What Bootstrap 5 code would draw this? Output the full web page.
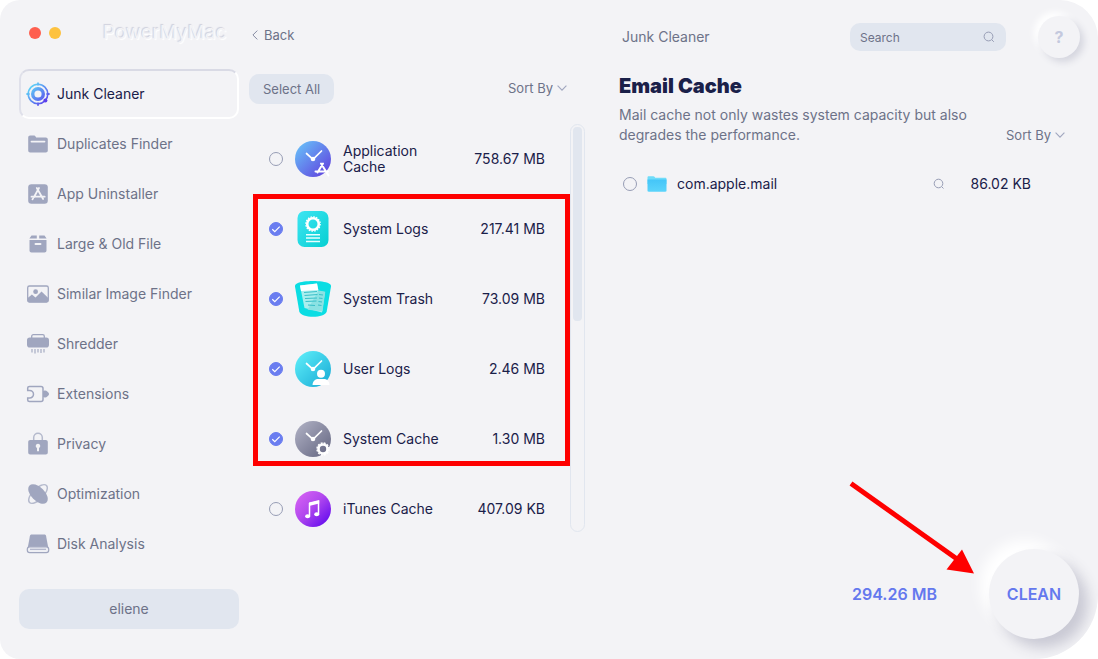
<!DOCTYPE html>
<html lang="en">
<head>
<meta charset="utf-8">
<meta name="viewport" content="width=device-width, initial-scale=1">
<title>PowerMyMac</title>
<link href="https://cdn.jsdelivr.net/npm/bootstrap@5.3.0/dist/css/bootstrap.min.css" rel="stylesheet">
<style>
  :root { --ink: #1a2049; --muted: #6d7288; --glyph: #a0a6bf; --soft: #e1e6ef; --accent: #6478ee; --panel: #f3f3f6; }
  body { font-family: Inter, "Liberation Sans", sans-serif; font-size: 14px; line-height: 20px; color: var(--muted); background: #fff; }
  .app-window { min-height: 100vh; background: var(--panel); border-radius: 20px 38px 64px 20px; padding: 0 18px 0 19px; overflow: hidden; }
  .head-bar { height: 69px; }
  .side-col { width: 220px; margin-right: 10px; }
  .mid-col { width: 336px; margin-right: 34px; }
  .window-tools { padding: 0 0 3px 10px; }
  .dot { width: 12px; height: 12px; border-radius: 50%; }
  .dot-red { background: #fe5f4f; }
  .dot-yellow { background: #fdc23f; }
  .brand { font-size: 19px; line-height: 24px; color: #f3f3f6; text-shadow: -1px -1px 1px #cfd0dc, 1px 1px 1px #fff; margin-left: 42px; }
  .side-link { height: 50px; padding: 0 7px; gap: 7px; color: var(--muted); border-radius: 10px; border: 0; text-decoration: none; }
  .side-link svg { width: 24px; height: 24px; fill: var(--glyph); flex: none; }
  .side-link.active { color: var(--ink); border: 2px solid #fff; border-top-color: #d9dae5; border-left-color: #dfe0ea; padding: 0 5px; }
  .soft-btn { background: var(--soft); color: var(--muted); border: 0; border-radius: 10px; font-size: inherit; line-height: 20px; }
  .user-btn { height: 40px; margin-bottom: 30px; }
  .all-btn { height: 30px; padding: 0 14px; font-size: 13px; line-height: 30px; }
  .back-btn { font-size: 13px; color: var(--muted); text-decoration: none; gap: 6px; padding-left: 3px; }
  .list-tools { height: 55px; padding: 5px 18px 0 0; }
  .sort-select { width: auto; padding: 0 14px 0 0; border: 0; font-size: 13px; line-height: 20px; color: var(--muted); background-color: transparent; background-position: right center; background-size: 10px 6px;
    background-image: url("data:image/svg+xml,%3Csvg xmlns='http://www.w3.org/2000/svg' viewBox='0 0 10 6'%3E%3Cpath d='M.6.6 5 5.2 9.400.6' fill='none' stroke='%23a0a6bf' stroke-width='1.1'/%3E%3C/svg%3E"); }
  .item-row { height: 70px; color: var(--ink); padding-left: 20px; gap: 12px; line-height: 16px; }
  .item-row svg { width: 36px; height: 36px; flex: none; }
  .item-name { width: 104px; }
  .round-check.form-check-input { width: 14px; height: 14px; margin: 0; border-radius: 50%; border: 1px solid #979db5; background-color: transparent; flex: none; }
  .round-check.form-check-input:checked { background-color: #6a7df0; border-color: #6a7df0;
    background-image: url("data:image/svg+xml,%3Csvg xmlns='http://www.w3.org/2000/svg' viewBox='0 0 12 12'%3E%3Cpath d='m2.300 6.200 2.500 2.400 4.900-4.900' fill='none' stroke='%23fff' stroke-width='1.200'/%3E%3C/svg%3E"); }
  .item-area { width: 296px; }
  .scroll-track { width: 15px; height: 408px; border: 1px solid var(--soft); border-radius: 8px; padding: 2px; }
  .scroll-thumb { height: 194px; width: 9px; border-radius: 4px; background: var(--soft); }
  .callout { top: 70px; left: 4px; width: 317px; height: 272px; border: 5px solid #fe0000; pointer-events: none; }
  .search-input { height: 28px; width: 156px; border: 0; border-radius: 10px; background: var(--soft); font-size: 12px; padding: 0 28px 0 10px; color: var(--muted); }
  .search-input::placeholder { color: var(--muted); opacity: 1; }
  .lens { width: 12px; height: 12px; fill: none; stroke: #979db5; }
  .lens-over { right: 11px; top: 8px; pointer-events: none; }
  .round-btn { border: 0; border-radius: 50%; background: var(--panel); padding: 0; }
  .help-btn { width: 42px; height: 42px; margin-left: 32px; color: #c4c9de; font-weight: 700; font-size: 16px; box-shadow: 4px 4px 7px #d5d6df, -4px -4px 7px #fff; }
  .clean-btn { width: 90px; height: 90px; margin: 0 1px 20px 52px; color: var(--accent); font-weight: 600; font-size: 16px; box-shadow: 9px 9px 14px #c9c9d4, -9px -9px 14px #fff; }
  .top-tools { padding: 0 0 0 3px; height: 74px; }
  .page-title { font-size: 20px; line-height: 24px; font-weight: 900; color: var(--ink); margin-bottom: 7px; }
  .blurb { max-width: 350px; }
  .file-row { height: 40px; margin-top: 19px; padding: 0 49px 0 4px; gap: 10px; color: var(--ink); }
  .right-sort { margin-right: 15px; }
  .total { color: var(--accent); font-size: 16px; font-weight: 600; margin-bottom: 20px; }
  .pointer-arrow { right: 123px; bottom: 84px; width: 126px; height: 94px; pointer-events: none; }
</style>
</head>
<body>
<svg width="0" height="0" class="position-absolute" aria-hidden="true">
  <defs>
    <linearGradient id="gBlue" x1="0" y1="0" x2="1" y2="1"><stop stop-color="#68c9fb"/><stop offset="1" stop-color="#6038dc"/></linearGradient>
    <linearGradient id="gTeal" x1="0" y1="0" x2="1" y2="1"><stop stop-color="#3fe5f2"/><stop offset="1" stop-color="#05cfd2"/></linearGradient>
    <linearGradient id="gSky" x1="0" y1="0" x2="1" y2="1"><stop stop-color="#61f1fb"/><stop offset="1" stop-color="#17a9d4"/></linearGradient>
    <linearGradient id="gGray" x1="0" y1="0" x2="1" y2="1"><stop stop-color="#b3b4c7"/><stop offset="1" stop-color="#62647f"/></linearGradient>
    <linearGradient id="gPink" x1="0" y1="0" x2="1" y2="1"><stop stop-color="#dc66f4"/><stop offset=".45" stop-color="#b249ee"/><stop offset="1" stop-color="#5500ee"/></linearGradient>
    <linearGradient id="gJunk" gradientUnits="userSpaceOnUse" x1="3" y1="3" x2="21" y2="21"><stop stop-color="#5fe0f8"/><stop offset="1" stop-color="#5b3fec"/></linearGradient>
    <linearGradient id="gFolder" x1="0" y1="0" x2="0" y2="1"><stop stop-color="#44c5f8"/><stop offset="1" stop-color="#5bd4fb"/></linearGradient>
    <g id="hands"><path d="m11.500 12.500 6.500 5.800 8.500-8.300" fill="none" stroke="#fff" stroke-width="1.700" stroke-linecap="round"/><circle cx="18" cy="18" r="2.300" fill="#fff"/></g>
  </defs>
</svg>

<div class="app-window d-flex position-relative">
  <aside class="side-col d-flex flex-column flex-shrink-0">
    <div class="head-bar window-tools d-flex align-items-center">
      <span class="dot dot-red me-2"></span><span class="dot dot-yellow"></span><span class="brand">PowerMyMac</span>
    </div>
    <nav class="nav flex-column flex-nowrap" aria-label="Tools">
      <a href="#" class="side-link active d-flex align-items-center" aria-current="page">
        <svg viewBox="0 0 24 24"><g fill="none" stroke="url(#gJunk)"><circle cx="12" cy="12" r="5.300" stroke-width="3.400"/><circle cx="12" cy="12" r="9.800" stroke-width="1.600"/><path d="M12 .4v3.200M12.010 20.500v3.200M.4 12h3.200M20.400 12.010h3.200" stroke-width="1.800"/></g><circle cx="19.400" cy="18.600" r="2" fill="#5b3fec"/></svg>
        <span>Junk Cleaner</span></a>
      <a href="#" class="side-link d-flex align-items-center">
        <svg viewBox="0 0 24 24"><path fill-rule="evenodd" d="M2.200 5.400c0-1.200.8-2 2-2h3.600c.8 0 1.400.5 1.800 1.200l.5.900h9.700c1.200 0 2 .8 2 2v11c0 1.200-.8 2-2 2H4.200c-1.200 0-2-.8-2-2zM5.500 8.700a.9.900 0 0 0 0 1.800h13a.9.900 0 0 0 0-1.800z"/></svg>
        <span>Duplicates Finder</span></a>
      <a href="#" class="side-link d-flex align-items-center">
        <svg viewBox="0 0 24 24"><rect x="2.200" y="2.200" width="19.600" height="19.600" rx="3.200"/><path d="M13 6 8 15M10.800 6l6.300 11M5.500 14.700h8.800M16.500 14.700h2.200M7.100 16.400l-.6 1" fill="none" stroke="#f3f3f6" stroke-width="1.800" stroke-linecap="round"/></svg>
        <span>App Uninstaller</span></a>
      <a href="#" class="side-link d-flex align-items-center">
        <svg viewBox="0 0 24 24"><path d="M5.500 3.500h5.300v3H3.400zM13.200 3.500h5.300l2.100 3h-7.400z"/><path fill-rule="evenodd" d="M3.500 8h17v10.500c0 1.300-.8 2-2 2h-13c-1.200 0-2-.7-2-2zm6 3a.9.900 0 0 0 0 1.900h5a.9.900 0 0 0 0-1.900z"/></svg>
        <span>Large &amp; Old File</span></a>
      <a href="#" class="side-link d-flex align-items-center">
        <svg viewBox="0 0 24 24"><rect x="1.700" y="4" width="20.600" height="16" rx="1.800" fill="none" stroke="#a0a6bf" stroke-width="1.300"/><circle cx="9.600" cy="9.700" r="2.400"/><path d="m1.700 16 4.200-3.600 3.600 3 6-5.900 6.800 6.500v2.500c0 1-.6 1.700-1.600 1.700H3.300c-1 0-1.600-.7-1.600-1.700z"/></svg>
        <span>Similar Image Finder</span></a>
      <a href="#" class="side-link d-flex align-items-center">
        <svg viewBox="0 0 24 24"><path d="M5.700 6V4.300c0-1 .6-1.600 1.600-1.600h9.400c1 0 1.600.6 1.600 1.600V6" fill="none" stroke="#a0a6bf" stroke-width="1.300"/><rect x="1" y="5.500" width="22" height="10" rx="2.800"/><path d="M6 17v3.500M9 17v4.500M12 17v3.500M15 17v4M18 17v3.500" stroke="#b5bacd" stroke-width="1.500"/></svg>
        <span>Shredder</span></a>
      <a href="#" class="side-link d-flex align-items-center">
        <svg viewBox="0 0 24 24"><path d="M3.500 4.500H15c1.300 0 2 .7 2 2v11c0 1.300-.7 2-2 2H3.500c-1.200 0-1.800-.5-1.800-1.500v-2h2a3.700 3.700 0 0 0 0-7.600h-2V6c0-1 .6-1.500 1.800-1.500z" fill="none" stroke="#a0a6bf" stroke-width="1.500"/><path d="M17 9.200l1-.5c1-.6 2.500-.3 3.300.8.500.9 1.700 1 1.700 2.500s-1.200 1.600-1.700 2.500c-.8 1.100-2.300 1.400-3.300.8l-1-.5z"/></svg>
        <span>Extensions</span></a>
      <a href="#" class="side-link d-flex align-items-center">
        <svg viewBox="0 0 24 24"><path d="M7.700 9V5.500a4.300 4.300 0 0 1 8.600 0V9" fill="none" stroke="#b5bacd" stroke-width="1.500"/><path fill-rule="evenodd" d="M4.200 8h15.600c1.200 0 2 .8 2 2v10.500c0 1.200-.8 2-2 2H4.200c-1.200 0-2-.8-2-2V10c0-1.200.8-2 2-2zM12 11.800a2.200 2.200 0 0 0-1 4.200v3.300h2V16a2.200 2.200 0 0 0-1-4.200z"/></svg>
        <span>Privacy</span></a>
      <a href="#" class="side-link d-flex align-items-center">
        <svg viewBox="0 0 24 24"><ellipse cx="12" cy="12" rx="12" ry="5.500" transform="rotate(-45 12 12)" fill="none" stroke="#b5bacd" stroke-width="1.400"/><ellipse cx="12" cy="12" rx="12" ry="6.800" transform="rotate(45 12 12)"/></svg>
        <span>Optimization</span></a>
      <a href="#" class="side-link d-flex align-items-center">
        <svg viewBox="0 0 24 24"><path d="M5.700 2.500h12.600c1 0 1.600.5 1.800 1.500l2 11H1.900l2-11c.2-1 .8-1.500 1.800-1.500z"/><rect x="1.300" y="14.800" width="21.400" height="5.800" rx="2.400" fill="#eeeff4" stroke="#a0a6bf" stroke-width="1.200"/><path d="M4 17.200h16" stroke="#a0a6bf" stroke-width="1.100"/></svg>
        <span>Disk Analysis</span></a>
    </nav>
    <button type="button" class="btn soft-btn user-btn mt-auto">eliene</button>
  </aside>

  <section class="mid-col flex-shrink-0" aria-label="Junk categories">
    <div class="head-bar d-flex align-items-center">
      <a href="#" class="back-btn d-flex align-items-center"><svg width="6" height="10" viewBox="0 0 6 10"><path d="M5.300.6.900 5l4.400 4.400" fill="none" stroke="#868ba3"/></svg>Back</a>
    </div>
    <div class="list-tools d-flex align-items-start justify-content-between">
      <button type="button" class="btn soft-btn all-btn">Select All</button>
      <select class="form-select sort-select mt-1" aria-label="Sort categories"><option>Sort By</option><option>Size</option><option>Name</option></select>
    </div>
    <div class="position-relative d-flex justify-content-between">
      <div class="item-area">
        <label class="item-row d-flex align-items-center">
          <input type="checkbox" class="form-check-input round-check">
          <svg viewBox="0 0 36 36"><circle cx="18" cy="18" r="18" fill="url(#gBlue)"/><use href="#hands"/><path d="m28 22.500-5.500 9M26 22.500l7.500 12M20.500 30.500h9M31 30.500h2" fill="none" stroke="#fff" stroke-width="2" stroke-linecap="round"/></svg>
          <span class="item-name">Application Cache</span><span class="ms-auto text-nowrap">758.67 MB</span></label>
        <label class="item-row d-flex align-items-center">
          <input type="checkbox" class="form-check-input round-check" checked>
          <svg viewBox="0 0 36 36"><rect x="2.500" width="31" height="36" rx="7" fill="url(#gTeal)"/><circle cx="18" cy="13" r="5.800" fill="none" stroke="#fff" stroke-width="2.600"/><circle cx="18" cy="13" r="7.200" fill="none" stroke="#fff" stroke-width="1.300" stroke-dasharray="1.500 1.330"/><path d="M11 23.700h14M11 27h14M11 30.500h14" stroke="#e8ffff" stroke-width="1.500"/></svg>
          <span class="item-name">System Logs</span><span class="ms-auto text-nowrap">217.41 MB</span></label>
        <label class="item-row d-flex align-items-center">
          <input type="checkbox" class="form-check-input round-check" checked>
          <svg viewBox="0 0 36 36"><path d="M2 2.500C9-.7 27-.7 34 2.500c1.500.7 2.200 1.500 2 3l-4.300 25C30 37.500 6 37.500 4.300 30.500L0 5.500c-.2-1.500.5-2.300 2-3z" fill="#0bdde3"/><path d="m5 4.500 17-2 1.500 7.500 6.500 1-3 20.500L9.500 27z" fill="#a9eeee"/><path d="m5 4.500 17-2 1.300 6.500L6 10z" fill="#fff"/><path d="m23.500 9.500 6.800 1.300-2.800 19.400-15-1.500z" fill="#8be2e3"/><path d="m9 11.500 13-1M9.500 14.500l13-1M10 17.500l12-.5M10.500 20.500l11-.5M24 13.500l4 .5M24 17l3.500.5M23.500 20.500l3.500.5M23 24l3.500.5M13 24l7 .5" stroke="#39bfc8" stroke-width="1.100"/></svg>
          <span class="item-name">System Trash</span><span class="ms-auto text-nowrap">73.09 MB</span></label>
        <label class="item-row d-flex align-items-center">
          <input type="checkbox" class="form-check-input round-check" checked>
          <svg viewBox="0 0 36 36"><circle cx="18" cy="18" r="18" fill="url(#gSky)"/><use href="#hands"/><circle cx="26" cy="22.800" r="4" fill="#fff"/><path d="M17.500 34c.3-4.300 2.800-6 6-6h5c3.300 0 5.700 1.700 6 6z" fill="#fff"/></svg>
          <span class="item-name">User Logs</span><span class="ms-auto text-nowrap">2.46 MB</span></label>
        <label class="item-row d-flex align-items-center">
          <input type="checkbox" class="form-check-input round-check" checked>
          <svg viewBox="0 0 36 36"><circle cx="18" cy="18" r="18" fill="url(#gGray)"/><use href="#hands"/><circle cx="28" cy="28" r="4.500" fill="none" stroke="#fff" stroke-width="2.600"/><circle cx="28" cy="28" r="6" fill="none" stroke="#fff" stroke-width="1.400" stroke-dasharray="2 1.140"/></svg>
          <span class="item-name">System Cache</span><span class="ms-auto text-nowrap">1.30 MB</span></label>
        <label class="item-row d-flex align-items-center">
          <input type="checkbox" class="form-check-input round-check">
          <svg viewBox="0 0 36 36"><circle cx="18" cy="18" r="18" fill="url(#gPink)"/><path d="M14.500 25V12.500l9-2V23" fill="none" stroke="#fff" stroke-width="1.500"/><path d="m14 11.400 10.200-2.300v3.500L14 14.900z" fill="#fff"/><ellipse cx="12.600" cy="25.200" rx="2.500" ry="2" fill="#fff"/><ellipse cx="21.700" cy="23.300" rx="2.500" ry="2" fill="#fff"/></svg>
          <span class="item-name">iTunes Cache</span><span class="ms-auto text-nowrap">407.09 KB</span></label>
      </div>
      <div class="scroll-track" aria-hidden="true"><div class="scroll-thumb"></div></div>
      <div class="callout position-absolute" aria-hidden="true"></div>
    </div>
  </section>

  <main class="flex-grow-1 d-flex flex-column">
    <div class="top-tools d-flex align-items-center">
      <span>Junk Cleaner</span>
      <div class="position-relative ms-auto">
        <input type="search" class="form-control search-input" placeholder="Search" aria-label="Search">
        <svg class="lens lens-over position-absolute" viewBox="0 0 12 12"><circle cx="5.500" cy="5.500" r="4.400"/><path d="m8.800 8.800 2 2"/></svg>
      </div>
      <button type="button" class="round-btn help-btn" aria-label="Help">?</button>
    </div>
    <h1 class="page-title">Email Cache</h1>
    <div class="d-flex align-items-end justify-content-between">
      <p class="blurb mb-0">Mail cache not only wastes system capacity but also degrades the performance.</p>
      <select class="form-select sort-select right-sort" aria-label="Sort files"><option>Sort By</option><option>Size</option><option>Name</option></select>
    </div>
    <div class="file-row d-flex align-items-center">
      <input type="checkbox" class="form-check-input round-check" id="mailFile">
      <svg width="20" height="16" viewBox="0 0 20 16"><path d="M.5 1.500C.5.700 1 .3 1.800.3h4.500c.7 0 1 .3 1.400.8l.5.700h10c.8 0 1.300.5 1.300 1.300V8H.5z" fill="#6fdcf9"/><path d="M.5 3.500h19v11c0 .8-.5 1.200-1.200 1.200H1.700c-.8 0-1.200-.4-1.200-1.200z" fill="url(#gFolder)"/></svg>
      <label for="mailFile">com.apple.mail</label>
      <svg class="lens ms-auto me-3" viewBox="0 0 12 12"><circle cx="5.500" cy="5.500" r="4.300"/><path d="m8.800 8.800 1.700 1.700"/></svg>
      <span>86.02 KB</span>
    </div>
    <div class="mt-auto d-flex align-items-center justify-content-end">
      <span class="total">294.26 MB</span>
      <button type="button" class="round-btn clean-btn">CLEAN</button>
    </div>
  </main>
  <svg class="pointer-arrow position-absolute" viewBox="0 0 126 94" aria-hidden="true"><path d="M2 2.500 108 78" stroke="#fe0000" stroke-width="5"/><path d="M125 92.500 97.500 88.500l15.500-20z" fill="#fe0000"/></svg>
</div>
<script src="https://cdn.jsdelivr.net/npm/bootstrap@5.3.0/dist/js/bootstrap.bundle.min.js"></script>
</body>
</html>
